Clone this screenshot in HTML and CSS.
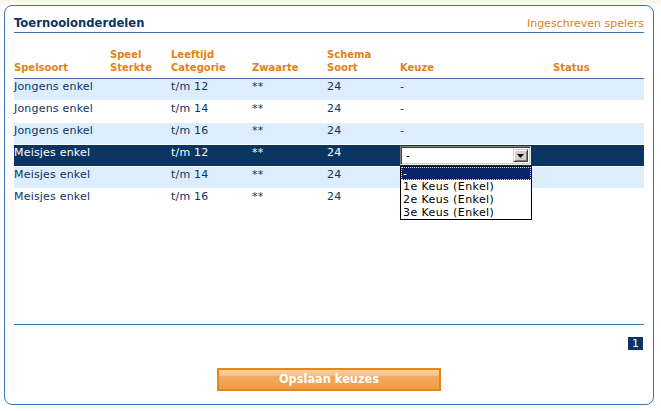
FILE: index.html
```html
<!DOCTYPE html>
<html lang="nl">
<head>
<meta charset="utf-8">
<title>Toernooionderdelen</title>
<link rel="stylesheet" href="styles.css">
</head>
<body>
<div class="panel">
  <div class="head">
    <h1 class="title">Toernooionderdelen</h1>
    <a class="link" href="#">Ingeschreven spelers</a>
  </div>
  <div class="tablewrap">
    <div class="row hd">
      <div>Spelsoort</div>
      <div>Speel<br>Sterkte</div>
      <div>Leeftijd<br>Categorie</div>
      <div>Zwaarte</div>
      <div>Schema<br>Soort</div>
      <div>Keuze</div>
      <div>Status</div>
    </div>
    <div class="row alt">
      <div>Jongens enkel</div><div></div><div>t/m 12</div><div>**</div><div>24</div><div>-</div><div></div>
    </div>
    <div class="row">
      <div>Jongens enkel</div><div></div><div>t/m 14</div><div>**</div><div>24</div><div>-</div><div></div>
    </div>
    <div class="row alt">
      <div>Jongens enkel</div><div></div><div>t/m 16</div><div>**</div><div>24</div><div>-</div><div></div>
    </div>
    <div class="row sel">
      <div>Meisjes enkel</div><div></div><div>t/m 12</div><div>**</div><div>24</div>
      <div class="keuze">
        <div class="select">
          <span class="value">-</span>
          <span class="drop"><svg width="7" height="4" viewBox="0 0 7 4"><path d="M0 0H7L3.5 4Z" fill="#000"/></svg></span>
          <div class="list">
            <div class="opt on"><span>-</span></div>
            <div class="opt">1e Keus (Enkel)</div>
            <div class="opt">2e Keus (Enkel)</div>
            <div class="opt">3e Keus (Enkel)</div>
          </div>
        </div>
      </div>
      <div></div>
    </div>
    <div class="row alt">
      <div>Meisjes enkel</div><div></div><div>t/m 14</div><div>**</div><div>24</div><div></div><div></div>
    </div>
    <div class="row">
      <div>Meisjes enkel</div><div></div><div>t/m 16</div><div>**</div><div>24</div><div></div><div></div>
    </div>
  </div>
  <div class="pager"><span class="page">1</span></div>
  <div class="actions"><button class="save" type="button">Opslaan keuzes</button></div>
</div>
</body>
</html>
```

FILE: styles.css
```css
* { box-sizing: border-box; }
html, body { margin: 0; padding: 0; }
body {
  width: 661px;
  height: 411px;
  overflow: hidden;
  background: linear-gradient(#fdf2e7 0, #ffffff 6px);
  font-family: "DejaVu Sans", Verdana, sans-serif;
  padding: 5px 0 0 4px;
}
.panel {
  width: 650px;
  height: 400px;
  border: 1px solid #3f73b0;
  border-radius: 8px;
  background: #fff;
  padding: 0 9px 0 9px;
}
.head {
  display: flex;
  justify-content: space-between;
  align-items: baseline;
  padding-top: 10px;
  padding-bottom: 1px;
  border-bottom: 1px solid #3d6fab;
}
.title {
  margin: 0;
  font-size: 11.6px;
  line-height: 14px;
  font-weight: bold;
  color: #0c3464;
}
.link {
  font-size: 11px;
  line-height: 14px;
  color: #e3811b;
  text-decoration: none;
}
.tablewrap {
  height: 292px;
  padding-top: 15px;
  border-bottom: 1px solid #3d6fab;
}
.row {
  display: grid;
  grid-template-columns: 96px 61px 81px 75px 73px 153px 90px;
  height: 22px;
  border-bottom: 1px solid #fff;
  font-size: 11px;
  line-height: 13px;
  letter-spacing: 0.2px;
  color: #0c3464;
}
.row > div { padding-top: 1px; }
.row.hd {
  height: auto;
  align-items: end;
  padding-bottom: 4px;
  border-bottom: 1px solid #3d6fab;
  font-size: 10px;
  font-weight: bold;
  letter-spacing: 0;
  color: #e3811b;
}
.row.hd > div { padding-top: 0; }
.row.alt { background: #ddedfc; }
.row.sel { background: #0a3462; color: #fff; }
.keuze { position: relative; }
.select {
  position: relative;
  width: 131px;
  height: 19px;
  background: #fff;
  border: 1px solid;
  border-color: #808080 #e8e8e8 #e8e8e8 #808080;
  box-shadow: inset 1px 1px #404040, inset -1px -1px #d4d0c8;
  color: #000;
  letter-spacing: 0;
}
.value {
  position: absolute;
  left: 5px;
  top: 2px;
  font-size: 11px;
  line-height: 13px;
}
.drop {
  position: absolute;
  right: 2px;
  top: 2px;
  width: 15px;
  height: 13px;
  background: #d4d0c8;
  border: 1px solid;
  border-color: #d4d0c8 #404040 #404040 #d4d0c8;
  box-shadow: inset 1px 1px #fff, inset -1px -1px #808080;
  display: flex;
  align-items: center;
  justify-content: center;
}
.drop svg { display: block; margin-top: 1px; }
.list {
  position: absolute;
  left: -1px;
  top: 19px;
  width: 132px;
  border: 1px solid #000;
  background: #fff;
  padding: 0;
}
.opt {
  height: 13px;
  line-height: 13px;
  font-size: 11px;
  letter-spacing: 0.4px;
  padding-left: 2px;
  color: #000;
  white-space: nowrap;
}
.opt.on {
  background: #0a246a;
  color: #fff;
  outline: 1px dotted #f0e68c;
  outline-offset: -1px;
}
.pager {
  display: flex;
  justify-content: flex-end;
  margin-top: 12px;
  padding-right: 1px;
}
.page {
  display: block;
  width: 15px;
  height: 13px;
  background: #0a3462;
  color: #fff;
  font-size: 11px;
  line-height: 13px;
  text-align: center;
}
.actions {
  display: flex;
  justify-content: center;
  margin-top: 18px;
}
.save {
  width: 224px;
  height: 23px;
  border: 2px solid #e6861a;
  background: linear-gradient(#f9d2a4 0, #f6c08a 28%, #f2aa5e 34%, #f0a453 70%, #ee9d4a 100%);
  color: #fff;
  font-family: "DejaVu Sans", Verdana, sans-serif;
  font-size: 11.4px;
  font-weight: bold;
  line-height: 17px;
  padding: 0;
  cursor: pointer;
}
```
